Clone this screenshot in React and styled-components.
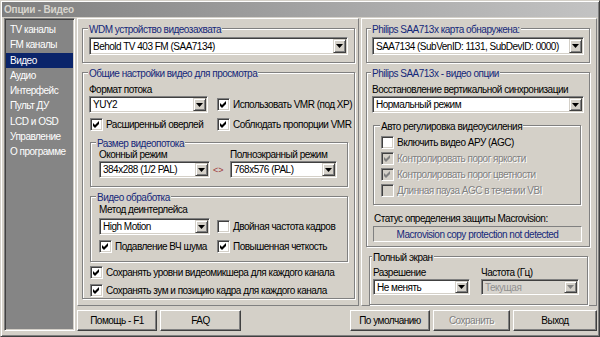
import React from "react";
import styled, { createGlobalStyle } from "styled-components";

const GlobalStyle = createGlobalStyle`
  html, body { margin: 0; padding: 0; background: #d4d0c8; }
  body {
    font-family: "Liberation Sans", Arial, sans-serif;
    font-size: 10px;
    letter-spacing: -0.5px;
    color: #000;
  }
  *, *::before, *::after { box-sizing: border-box; }
`;

const Window = styled.div`
  width: 600px;
  height: 337px;
  background: #d4d0c8;
  border: 1px solid;
  border-color: #d4d0c8 #404040 #404040 #d4d0c8;
  box-shadow: inset 1px 1px #fff, inset -1px -1px #808080;
  padding: 1px 2px 5px 3px;
  display: flex;
  flex-direction: column;
  overflow: hidden;
`;

const TitleBar = styled.div`
  height: 15px;
  margin: 0 -1px 1px -2px;
  padding-left: 2px;
  background: linear-gradient(90deg, #7f7f7f 0%, #a9a9a9 60%, #c3c3c3 100%);
  color: #d8d5ce;
  font-weight: bold;
  line-height: 15px;
  letter-spacing: -0.2px;
`;

const Body = styled.div`
  flex: 1;
  min-height: 0;
  display: flex;
  gap: 2px;
`;

const Sidebar = styled.div`
  width: 71px;
  background: #858585;
  border: 1px solid;
  border-color: #808080 #fff #fff #808080;
  box-shadow: inset 1px 1px #404040, inset -1px -1px #d4d0c8;
  padding: 3px 1px 0;
  display: flex;
  flex-direction: column;
`;

const SideItem = styled.div`
  height: 15.3px;
  line-height: 15.3px;
  padding-left: 4px;
  color: #fff;
  white-space: nowrap;
  background: ${(p) => (p.$active ? "#0a246a" : "transparent")};
`;

const Main = styled.div`
  flex: 1;
  min-width: 0;
  display: flex;
  flex-direction: column;
  gap: 4px;
`;

const Panels = styled.div`
  flex: 1;
  min-height: 0;
  display: flex;
  gap: 2px;
`;

const Panel = styled.div`
  width: ${(p) => (p.$w ? `${p.$w}px` : "auto")};
  flex: ${(p) => (p.$w ? "none" : "1")};
  border: 1px solid;
  border-color: #fff #808080 #808080 #fff;
  padding: 9px ${(p) => p.$pr}px 0 ${(p) => p.$pl}px;
  display: flex;
  flex-direction: column;
`;

const Group = styled.div`
  border: 1px solid #808080;
  box-shadow: inset 1px 1px #fff, 1px 1px #fff;
  margin: ${(p) => p.$m || "0"};
  padding: ${(p) => p.$p || "0 6px 7px 6px"};
  display: flex;
  flex-direction: column;
`;

const Legend = styled.div`
  align-self: flex-start;
  height: 13px;
  line-height: 13px;
  margin: -6px 0 0 ${(p) => (p.$ml ?? -1)}px;
  padding: 0 1px;
  background: #d4d0c8;
  white-space: nowrap;
  color: ${(p) => (p.$plain ? "#000" : "#14287a")};
`;

const Label = styled.div`
  height: 13px;
  line-height: 13px;
  white-space: nowrap;
  margin: ${(p) => p.$mt || 0}px 0 0 ${(p) => p.$ml || 0}px;
`;

const Row = styled.div`
  display: grid;
  grid-template-columns: ${(p) => p.$cols};
  align-items: center;
  margin-top: ${(p) => p.$mt || 0}px;
`;

const SizeGrid = styled.div`
  display: grid;
  grid-template-columns: 111px 20px 107px;
  grid-template-rows: 13px 17px;
  margin-top: ${(p) => p.$mt || 0}px;
`;

const Arrows = styled.span`
  align-self: center;
  justify-self: start;
  margin-left: 3px;
  color: #a03838;
  font-size: 9px;
  letter-spacing: 0;
`;

const SelectBox = styled.div`
  display: flex;
  align-items: stretch;
  width: ${(p) => (p.$w ? `${p.$w}px` : "auto")};
  height: ${(p) => p.$h || 17}px;
  margin-top: ${(p) => p.$mt || 0}px;
  background: ${(p) => (p.$disabled ? "#d8d5cf" : "#fff")};
  border: 1px solid;
  border-color: #808080 #fff #fff #808080;
  box-shadow: inset 1px 1px #404040, inset -1px -1px #d4d0c8;
  padding: 1px;
`;

const SelectText = styled.span`
  flex: 1;
  min-width: 0;
  padding-left: 2px;
  white-space: nowrap;
  overflow: hidden;
  display: flex;
  align-items: center;
  color: ${(p) => (p.$disabled ? "#909090" : "#000")};
`;

const DropBtn = styled.span`
  width: 13px;
  flex: none;
  background: #d4d0c8;
  border: 1px solid;
  border-color: #d4d0c8 #404040 #404040 #d4d0c8;
  box-shadow: inset 1px 1px #fff, inset -1px -1px #808080;
  display: flex;
  align-items: center;
  justify-content: center;
`;

const CheckLabel = styled.label`
  display: flex;
  align-items: center;
  gap: 3px;
  height: 13px;
  white-space: nowrap;
  margin: ${(p) => p.$mt || 0}px 0 0 ${(p) => p.$ml || 0}px;
  color: ${(p) => (p.$disabled ? "#808080" : "#000")};
  text-shadow: ${(p) => (p.$disabled ? "1px 1px 0 #fff" : "none")};
`;

const Box = styled.span`
  width: 13px;
  height: 13px;
  flex: none;
  background: ${(p) => (p.$disabled ? "#d4d0c8" : "#fff")};
  border: 1px solid;
  border-color: #808080 #fff #fff #808080;
  box-shadow: inset 1px 1px #404040, inset -1px -1px #d4d0c8;
  display: flex;
  align-items: center;
  justify-content: center;
`;

const Status = styled.div`
  height: 16px;
  margin: 1px 2px 0 1px;
  border: 1px solid;
  border-color: #808080 #fff #fff #808080;
  display: flex;
  align-items: center;
  justify-content: center;
  color: #14287a;
  white-space: nowrap;
`;

const ButtonRow = styled.div`
  height: 21px;
  display: flex;
  gap: 3px;
`;

const Spacer = styled.div`
  flex: 1;
`;

const Btn = styled.div`
  width: ${(p) => p.$w}px;
  border: 1px solid;
  border-color: #fff #404040 #404040 #fff;
  box-shadow: inset -1px -1px #808080;
  display: flex;
  align-items: center;
  justify-content: center;
  white-space: nowrap;
  color: ${(p) => (p.$disabled ? "#808080" : "#000")};
  text-shadow: ${(p) => (p.$disabled ? "1px 1px 0 #fff" : "none")};
`;

function Arrow({ disabled }) {
  return (
    <svg width="7" height="4" viewBox="0 0 7 4">
      <polygon points="0,0 7,0 3.5,4" fill={disabled ? "#808080" : "#000"} />
    </svg>
  );
}

function Select({ children, w, h, mt, disabled }) {
  return (
    <SelectBox $w={w} $h={h} $mt={mt} $disabled={disabled}>
      <SelectText $disabled={disabled}>{children}</SelectText>
      <DropBtn>
        <Arrow disabled={disabled} />
      </DropBtn>
    </SelectBox>
  );
}

function Check({ children, checked, disabled, mt, ml }) {
  return (
    <CheckLabel $disabled={disabled} $mt={mt} $ml={ml}>
      <Box $disabled={disabled}>
        {checked && (
          <svg width="7" height="7" viewBox="0 0 7 7">
            <polygon
              points="0,2 2,4 6,0 6,3 2,7 0,5"
              fill={disabled ? "#808080" : "#000"}
            />
          </svg>
        )}
      </Box>
      <span>{children}</span>
    </CheckLabel>
  );
}

const menu = [
  "TV каналы",
  "FM каналы",
  "Видео",
  "Аудио",
  "Интерфейс",
  "Пульт ДУ",
  "LCD и OSD",
  "Управление",
  "О программе",
];

export default function App() {
  return (
    <>
      <GlobalStyle />
      <Window>
        <TitleBar>Опции - Видео</TitleBar>
        <Body>
          <Sidebar>
            {menu.map((m) => (
              <SideItem key={m} $active={m === "Видео"}>
                {m}
              </SideItem>
            ))}
          </Sidebar>
          <Main>
            <Panels>
              <Panel $w={282} $pl={4} $pr={3}>
                <Group>
                  <Legend>WDM устройство видеозахвата</Legend>
                  <Select h={18} mt={1}>Behold TV 403 FM (SAA7134)</Select>
                </Group>
                <Group $m="9px 0 0" $p="0 6px 1px 6px">
                  <Legend>Общие настройки видео для просмотра</Legend>
                  <Label $mt={3}>Формат потока</Label>
                  <Row $cols="128px 1fr">
                    <Select w={119}>YUY2</Select>
                    <Check checked>Использовать VMR (под XP)</Check>
                  </Row>
                  <Row $cols="128px 1fr" $mt={5}>
                    <Check checked ml={1}>Расширенный оверлей</Check>
                    <Check checked>Соблюдать пропорции VMR</Check>
                  </Row>
                  <Group $m="11px 0 0 1px" $p="0 6px 8px 8px">
                    <Legend $ml={-3}>Размер видеопотока</Legend>
                    <SizeGrid $mt={-2}>
                      <Label>Оконный режим</Label>
                      <span />
                      <Label>Полноэкранный режим</Label>
                      <Select>384x288 (1/2 PAL)</Select>
                      <Arrows>&lt;&gt;</Arrows>
                      <Select>768x576 (PAL)</Select>
                    </SizeGrid>
                  </Group>
                  <Group $m="9px 0 0 1px" $p="0 6px 8px 8px">
                    <Legend $ml={-3}>Видео обработка</Legend>
                    <Label $mt={-1}>Метод деинтерлейса</Label>
                    <Row $cols="118px 1fr" $mt={2}>
                      <Select w={111}>High Motion</Select>
                      <Check>Двойная частота кадров</Check>
                    </Row>
                    <Row $cols="118px 1fr" $mt={5}>
                      <Check checked>Подавление ВЧ шума</Check>
                      <Check checked>Повышенная четкость</Check>
                    </Row>
                  </Group>
                  <Check checked mt={4} ml={1}>
                    Сохранять уровни видеомикшера для каждого канала
                  </Check>
                  <Check checked mt={5} ml={1}>
                    Сохранять зум и позицию кадра для каждого канала
                  </Check>
                </Group>
              </Panel>
              <Panel $pl={4} $pr={6}>
                <Group $p="0 5px 7px 5px">
                  <Legend>Philips SAA713x карта обнаружена:</Legend>
                  <Select h={18} mt={1}>
                    SAA7134 (SubVenID: 1131, SubDevID: 0000)
                  </Select>
                </Group>
                <Group $m="9px 0 0" $p="0 5px 4px 5px">
                  <Legend>Philips SAA713x - видео опции</Legend>
                  <Label $mt={3}>Восстановление вертикальной синхронизации</Label>
                  <Select>Нормальный режим</Select>
                  <Group $m="12px 3px 0 1px" $p="0 6px 7px 7px">
                    <Legend $plain>Авто регулировка видеоусиления</Legend>
                    <Check mt={3}>Включить видео АРУ (AGC)</Check>
                    <Check checked disabled mt={3}>
                      Контролировать порог яркости
                    </Check>
                    <Check checked disabled mt={3}>
                      Контролировать порог цветности
                    </Check>
                    <Check disabled mt={3}>
                      Длинная пауза AGC в течении VBI
                    </Check>
                  </Group>
                  <Label $mt={7} $ml={2}>
                    Статус определения защиты Macrovision:
                  </Label>
                  <Status>Macrovision copy protection not detected</Status>
                </Group>
                <Group $m="9px 2px 0 3px" $p="0 5px 9px 3px">
                  <Legend $plain>Полный экран</Legend>
                  <Row $cols="108px 1fr" $mt={2}>
                    <Label>Разрешение</Label>
                    <Label>Частота (Гц)</Label>
                    <Select w={97} h={16}>Не менять</Select>
                    <Select w={98} h={16} disabled>Текущая</Select>
                  </Row>
                </Group>
              </Panel>
            </Panels>
            <ButtonRow>
              <Btn $w={80}>Помощь - F1</Btn>
              <Btn $w={81}>FAQ</Btn>
              <Spacer />
              <Btn $w={80}>По умолчанию</Btn>
              <Btn $w={77} $disabled>Сохранить</Btn>
              <Btn $w={84}>Выход</Btn>
            </ButtonRow>
          </Main>
        </Body>
      </Window>
    </>
  );
}
